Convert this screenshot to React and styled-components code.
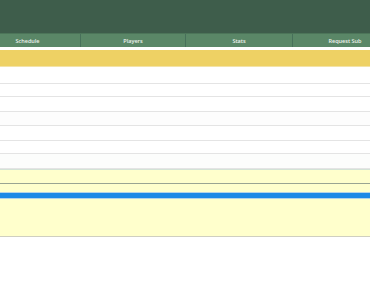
import React from "react";
import styled, { createGlobalStyle } from "styled-components";

const Global = createGlobalStyle`
  html, body { margin: 0; padding: 0; background: #ffffff; overflow: hidden; }
  body { font-family: "Open Sans", "Liberation Sans", Arial, sans-serif; }
`;

const Page = styled.div`
  width: 370px;
  overflow: hidden;
`;

const Header = styled.header`
  height: 33px;
  background: #3e5d4b;
`;

const Nav = styled.nav`
  display: grid;
  grid-template-columns: 105px 105px 107px 105px;
  height: 14px;
  margin-left: -25px;
  width: 422px;
  background: #5a8767;
  border-top: 1px solid #4c7559;
  box-sizing: border-box;
`;

const NavItem = styled.div`
  display: flex;
  align-items: center;
  justify-content: center;
  color: #eef3ee;
  font-size: 5.5px;
  font-weight: 600;
  border-left: ${(p) => (p.$first ? "none" : "1px solid #47705a")};
`;

const Spacer = styled.div`
  height: 3px;
`;

const Banner = styled.div`
  height: 17px;
  background: #eed164;
  border-bottom: 1px solid #f3e3a6;
  box-sizing: border-box;
`;

const Row = styled.div`
  height: ${(p) => p.$h}px;
  background: ${(p) => p.$bg || "#ffffff"};
  border-bottom: 1px solid #e4e4e4;
  box-sizing: border-box;
`;

const Notice = styled.div`
  background: #ffffcc;
  border-top: 1px solid #d3e3d6;
`;

const NoticeTop = styled.div`
  height: 13px;
  border-bottom: 1px solid #9aa592;
`;

const NoticeGap = styled.div`
  height: 8px;
`;

const Progress = styled.div`
  height: 7px;
  background: #1e89e6;
  border-top: 1px solid #b6d3e6;
  border-bottom: 1px solid #b6d3e6;
  box-sizing: border-box;
`;

const NoticeBody = styled.div`
  height: 37px;
  border-bottom: 1px solid #cfcfc0;
`;

const rows = [
  { h: 17 },
  { h: 13 },
  { h: 15 },
  { h: 14, bg: "#fdfdfd" },
  { h: 15 },
  { h: 13 },
  { h: 15, bg: "#fcfdfc" },
];

export default function App() {
  return (
    <Page>
      <Global />
      <Header />
      <Nav>
        <NavItem $first>Schedule</NavItem>
        <NavItem>Players</NavItem>
        <NavItem>Stats</NavItem>
        <NavItem>Request Sub</NavItem>
      </Nav>
      <Spacer />
      <Banner />
      {rows.map((r, i) => (
        <Row key={i} $h={r.h} $bg={r.bg} />
      ))}
      <Notice>
        <NoticeTop />
        <NoticeGap />
        <Progress />
        <NoticeBody />
      </Notice>
    </Page>
  );
}
